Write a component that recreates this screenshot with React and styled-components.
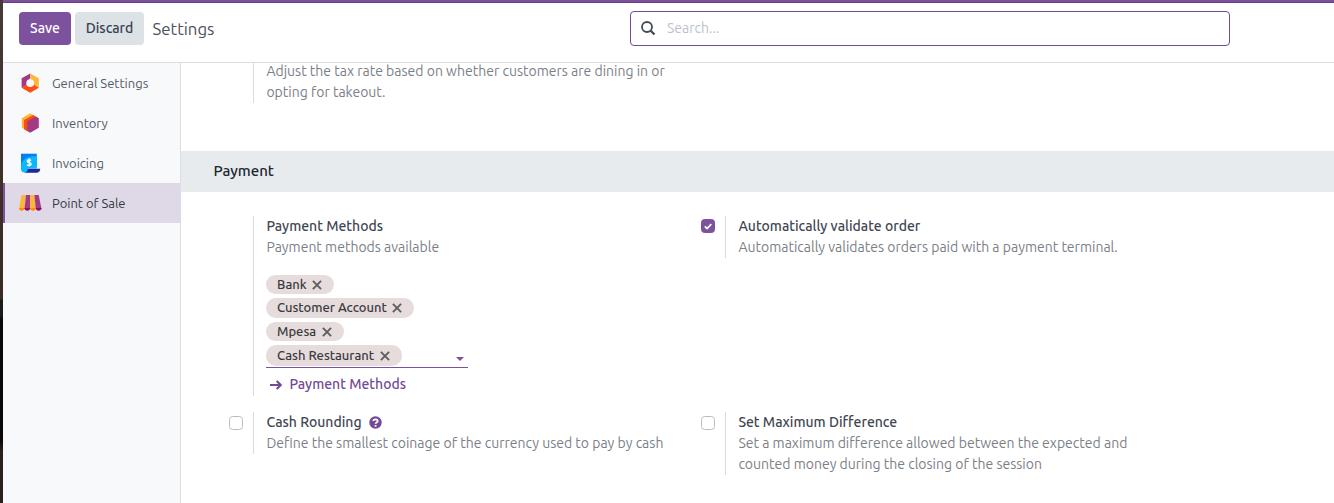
import React from "react";
import styled, { createGlobalStyle } from "styled-components";

const GlobalStyle = createGlobalStyle`
  *, *::before, *::after { box-sizing: border-box; }
  html, body { margin: 0; height: 503px; overflow: hidden; background: #fff; }
  body { font-family: Ubuntu, "Noto Sans", "Open Sans", sans-serif; font-size: 14px; line-height: 21px; color: #374151; }
  button { font: inherit; border: 0; margin: 0; cursor: pointer; }
`;

const Screen = styled.div`
  display: flex;
  width: 1334px;
  height: 503px;
  overflow: hidden;
`;

const DesktopEdge = styled.div`
  flex: none;
  width: 3px;
  background: linear-gradient(#4a3a35 0, #42342c 100px, #3b2b22 299px, #1b1b1b 300px, #1b1b1b 315px, #0b0808 320px, #0b0808 440px, #2c221d 452px, #2c221d);
`;

const Client = styled.div`
  flex: 1;
  min-width: 0;
  display: flex;
  flex-direction: column;
`;

const NavStrip = styled.div`
  flex: none;
  height: 3px;
  background: #7c529f;
  border-bottom: 1px solid #643f86;
`;

const ControlBar = styled.header`
  flex: none;
  height: 60px;
  display: flex;
  align-items: flex-start;
  padding: 8px 0 0 16px;
  border-bottom: 1px solid #d9dfe4;
`;

const Button = styled.button`
  flex: none;
  width: ${(p) => p.$width}px;
  height: 33px;
  margin: 1px 4px 0 0;
  padding: 0 0 1px;
  border-radius: 4px;
  font-weight: 500;
  color: ${(p) => (p.$primary ? "#fff" : "#374151")};
  background: ${(p) => (p.$primary ? "#7c529f" : "#dce2e6")};
`;

const Breadcrumb = styled.div`
  flex: none;
  width: 482px;
  padding: 7px 0 0 4.5px;
  font-size: 16.8px;
  color: #4b525b;
`;

const SearchBox = styled.div`
  width: 600px;
  height: 35px;
  display: flex;
  align-items: center;
  gap: 11px;
  padding: 0 10px;
  border: 1px solid #714b97;
  border-radius: 4px;
  color: #bcc2ca;
`;

const Body = styled.div`
  flex: 1;
  min-height: 0;
  display: flex;
`;

const Sidebar = styled.nav`
  flex: none;
  width: 178px;
  background: #f8f9fb;
  border-right: 1px solid #d9dfe4;
`;

const Tab = styled.div`
  height: 40px;
  display: flex;
  align-items: center;
  padding-left: ${(p) => (p.$active ? 13 : 15)}px;
  border-left: ${(p) => (p.$active ? "2px solid #7c529f" : "0")};
  background: ${(p) => (p.$active ? "#dfd9e7" : "transparent")};
  color: ${(p) => (p.$active ? "#343a43" : "#545b66")};
  font-size: 13px;
`;

const TabIcon = styled.svg`
  flex: none;
  width: 24px;
  height: 24px;
  margin-right: 10px;
`;

const Content = styled.main`
  flex: 1;
  min-width: 0;
  overflow: hidden;
`;

const SectionTitle = styled.h2`
  height: 41px;
  margin: 0;
  padding: 9px 0 0 32.4px;
  background: #e7ebee;
  color: #20262e;
  font-size: 15px;
  line-height: 21px;
  font-weight: 500;
`;

const ClippedBlock = styled.div`
  height: 88px;
  padding-left: 48px;
`;

const SettingsGrid = styled.section`
  display: grid;
  grid-template-columns: 472px 472px;
  row-gap: 16px;
  align-items: start;
  padding: 24px 0 0 48px;
`;

const Setting = styled.div`
  display: flex;
  align-items: flex-start;
`;

const CheckSlot = styled.div`
  width: 24px;
  padding-top: ${(p) => p.$top}px;
`;

const Checkbox = styled.div`
  width: 14px;
  height: 14px;
  display: flex;
  align-items: center;
  justify-content: center;
  border: 1px solid ${(p) => (p.$checked ? "#7c529f" : "#b9bcc0")};
  border-radius: 3.5px;
  background: ${(p) => (p.$checked ? "#7c529f" : "#fff")};
`;

const Pane = styled.div`
  height: ${(p) => p.$height}px;
  padding-left: 12.4px;
  border-left: 1px solid #d9dbde;
`;

const CutPane = styled(Pane)`
  overflow: hidden;
  display: flex;
  flex-direction: column;
  justify-content: flex-end;
`;

const Label = styled.div`
  display: flex;
  align-items: center;
  height: 21px;
  font-weight: 500;
  color: #3f4753;
  white-space: nowrap;
`;

const Hint = styled.div`
  flex: none;
  height: 21px;
  color: #7b8087;
  white-space: nowrap;
`;

const TagField = styled.div`
  position: relative;
  width: 202px;
  height: 93px;
  margin: 17px 0 0 -0.4px;
  display: flex;
  flex-direction: column;
  align-items: flex-start;
  gap: 4px;
  border-bottom: 1px solid #7c529f;
`;

const Tag = styled.div`
  flex: none;
  display: flex;
  align-items: center;
  justify-content: space-between;
  width: ${(p) => p.$width}px;
  height: ${(p) => p.$height}px;
  padding: 0 12.4px ${(p) => p.$drop || 0}px 11px;
  border-radius: 10px;
  background: #e6dcdc;
  color: #3a3a40;
  font-size: 13px;
  font-weight: 500;
  line-height: 19px;
  white-space: nowrap;
`;

const Caret = styled.div`
  position: absolute;
  right: 4px;
  bottom: 6px;
  border: 4px solid transparent;
  border-top-color: #7c529f;
  border-bottom: 0;
`;

const LinkRow = styled.a`
  display: flex;
  align-items: center;
  height: 21px;
  margin-top: 6px;
  padding-left: 4px;
  gap: 7px;
  font-weight: 500;
  color: #714b97;
`;

const HelpIcon = styled.svg`
  margin-left: 7.4px;
`;

const SearchIcon = () => (
  <svg width="15" height="15" viewBox="0 0 15 15" fill="none" stroke="#434b57">
    <circle cx="6" cy="6" r="5" strokeWidth="1.8" />
    <path d="M9.6 9.6 13.5 13.5" strokeWidth="2.2" />
  </svg>
);

const GeneralIcon = () => (
  <TabIcon viewBox="0 0 24 24">
    <path d="M12.2 2.4 3.6 7.2v9.6L8 14.5 12.2 7z" fill="#a33b84" />
    <path d="M12.2 2.4l8.6 4.8v9.6L16 14.5 12.2 7z" fill="#fbb739" />
    <path d="M3.6 16.8 12.2 21.8l8.6-5-5-3H9z" fill="#ff4b0d" />
    <circle cx="12.2" cy="12.1" r="3.9" fill="#f8f9fb" />
  </TabIcon>
);

const InventoryIcon = () => (
  <TabIcon viewBox="0 0 24 24">
    <path d="M12.2 2.3 3.9 7.2v9.6l3 1.7L16 4.5z" fill="#fbb739" />
    <path d="M15.2 4 6 9v9.3l3.2 2L18.5 5.9z" fill="#ff4b0d" />
    <path d="M20.8 7.2v9.6l-8.6 5-3-1.8v-9.8l8.8-4.6z" fill="#a33b84" />
  </TabIcon>
);

const InvoicingIcon = () => (
  <TabIcon viewBox="0 0 24 24">
    <path d="M3 2.7h15.8v13H3z" fill="#067cf3" />
    <path d="M18.8 5v12.6H10V21.5H6.5A3.7 3.7 0 0 1 3 17.8V15.2C3 9 9 5 18.8 5z" fill="#0bb8fb" />
    <path d="M10 17.8h12.2c0 2.3-1.2 3.9-3.2 3.9H6.4c2 0 3.6-1.6 3.6-3.9z" fill="#20299b" />
    <path d="M13 9.6c-.7-.7-3.7-1-3.7.7 0 1.8 3.8.9 3.8 2.8 0 1.8-3.1 1.6-4 .6M11.2 7.6v8" fill="none" stroke="#fff" strokeWidth="1.5" />
  </TabIcon>
);

const SaleIcon = () => (
  <TabIcon viewBox="0 0 24 24">
    <path d="M3.5 4H8L6.5 18H1z" fill="#fbb739" />
    <path d="M8 4h4.2v14H6.5z" fill="#a33b84" />
    <path d="M12.2 4h4.2l1.4 14h-5.6z" fill="#fbb739" />
    <path d="M16.4 4h4.3l2.8 14h-5.7z" fill="#a33b84" />
    <path d="M1 17h5.5c0 3.7-5.5 3.7-5.5 0zM12.2 17h5.6c0 3.7-5.6 3.7-5.6 0z" fill="#fb8d08" />
    <path d="M6.5 17h5.7c0 3.7-5.7 3.7-5.7 0zM17.8 17h5.7c0 3.7-5.7 3.7-5.7 0z" fill="#8a0e61" />
  </TabIcon>
);

const RemoveIcon = () => (
  <svg width="10" height="10" viewBox="0 0 10 10" stroke="#5f5d5e" strokeWidth="1.9">
    <path d="M.9.9l8.200 8.200M9.100.9L.9 9.100" />
  </svg>
);

const ArrowIcon = () => (
  <svg width="12" height="12" viewBox="0 0 12 12" fill="none" stroke="#714b97" strokeWidth="2.1">
    <path d="M0 6h11M6.7 2 10.7 6l-4 4" />
  </svg>
);

const Help = () => (
  <HelpIcon width="13" height="13" viewBox="0 0 13 13">
    <circle cx="6.5" cy="6.5" r="6.2" fill="#714b97" />
    <path d="M4.3 5c.2-2.1 4.4-2.1 4.4.1 0 1.5-2.1 1.3-2.1 2.7M6.6 8.9v1.8" fill="none" stroke="#fff" strokeWidth="1.8" />
  </HelpIcon>
);

const tabs = [
  { name: "General Settings", icon: GeneralIcon },
  { name: "Inventory", icon: InventoryIcon },
  { name: "Invoicing", icon: InvoicingIcon },
  { name: "Point of Sale", icon: SaleIcon, active: true },
];

const tags = [
  { name: "Bank", width: 68, height: 19 },
  { name: "Customer Account", width: 148, height: 20, drop: 1 },
  { name: "Mpesa", width: 78, height: 19 },
  { name: "Cash Restaurant", width: 136, height: 21 },
];

export default function App() {
  return (
    <Screen>
      <GlobalStyle />
      <DesktopEdge />
      <Client>
        <NavStrip />
        <ControlBar>
          <Button $primary $width={52}>Save</Button>
          <Button $width={69}>Discard</Button>
          <Breadcrumb>Settings</Breadcrumb>
          <SearchBox>
            <SearchIcon />
            <span>Search...</span>
          </SearchBox>
        </ControlBar>
        <Body>
          <Sidebar>
            {tabs.map(({ name, icon: Icon, active }) => (
              <Tab key={name} $active={active}>
                <Icon />
                {name}
              </Tab>
            ))}
          </Sidebar>
          <Content>
            <ClippedBlock>
              <Setting>
                <CheckSlot />
                <CutPane $height={40}>
                  <Hint>Adjust the tax rate based on whether customers are dining in or</Hint>
                  <Hint>opting for takeout.</Hint>
                </CutPane>
              </Setting>
            </ClippedBlock>
            <SectionTitle>Payment</SectionTitle>
            <SettingsGrid>
              <Setting>
                <CheckSlot />
                <Pane $height={180}>
                  <Label>Payment Methods</Label>
                  <Hint>Payment methods available</Hint>
                  <TagField>
                    {tags.map((t) => (
                      <Tag key={t.name} $width={t.width} $height={t.height} $drop={t.drop}>
                        {t.name}
                        <RemoveIcon />
                      </Tag>
                    ))}
                    <Caret />
                  </TagField>
                  <LinkRow>
                    <ArrowIcon />
                    Payment Methods
                  </LinkRow>
                </Pane>
              </Setting>
              <Setting>
                <CheckSlot $top={3}>
                  <Checkbox $checked>
                    <svg width="8" height="7" viewBox="0 0 8 7" fill="none" stroke="#fff" strokeWidth="1.7">
                      <path d="M.8 3.3 3.1 5.5 7.3 1.2" />
                    </svg>
                  </Checkbox>
                </CheckSlot>
                <Pane $height={42}>
                  <Label>Automatically validate order</Label>
                  <Hint>Automatically validates orders paid with a payment terminal.</Hint>
                </Pane>
              </Setting>
              <Setting>
                <CheckSlot $top={4}>
                  <Checkbox />
                </CheckSlot>
                <Pane $height={42}>
                  <Label>
                    Cash Rounding
                    <Help />
                  </Label>
                  <Hint>Define the smallest coinage of the currency used to pay by cash</Hint>
                </Pane>
              </Setting>
              <Setting>
                <CheckSlot $top={4}>
                  <Checkbox />
                </CheckSlot>
                <Pane $height={63}>
                  <Label>Set Maximum Difference</Label>
                  <Hint>Set a maximum difference allowed between the expected and</Hint>
                  <Hint>counted money during the closing of the session</Hint>
                </Pane>
              </Setting>
            </SettingsGrid>
          </Content>
        </Body>
      </Client>
    </Screen>
  );
}
